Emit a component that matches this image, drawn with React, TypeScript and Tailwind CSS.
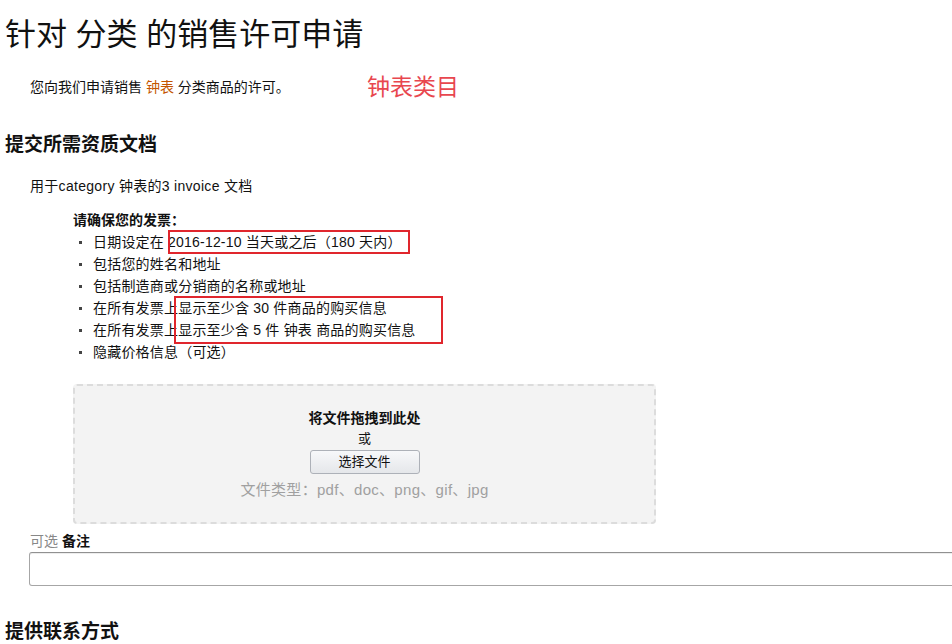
const items = [
  "日期设定在 2016-12-10 当天或之后（180 天内）",
  "包括您的姓名和地址",
  "包括制造商或分销商的名称或地址",
  "在所有发票上显示至少含 30 件商品的购买信息",
  "在所有发票上显示至少含 5 件 钟表 商品的购买信息",
  "隐藏价格信息（可选）",
];

const App = () => {
  return (
    <div
      className="w-[952px] h-[644px] overflow-hidden bg-white text-[#111]"
      style={{ fontFamily: '"Liberation Sans", "Noto Sans CJK SC", sans-serif' }}
    >
      <h1 className="pt-[16px] pl-[5px] text-[31px] leading-[38px] font-normal">针对 分类 的销售许可申请</h1>

      <div className="mt-[18px] h-[30px] pl-[30px] flex items-center">
        <span className="w-[337px] text-[14px] leading-[20px]">
          您向我们申请销售 <span className="text-[#c45500]">钟表</span> 分类商品的许可。
        </span>
        <span className="text-[23px] leading-[30px] text-[#e8474f]">钟表类目</span>
      </div>

      <h2 className="mt-[31px] pl-[5px] text-[19px] leading-[24px] font-bold">提交所需资质文档</h2>

      <p className="mt-[19px] pl-[30px] text-[14px] leading-[20px] tracking-[0.3px]">用于category 钟表的3 invoice 文档</p>

      <div className="relative mt-[14px] pl-[73px]">
        <p className="text-[14px] leading-[20px] font-bold">请确保您的发票：</p>
        <ul className="mt-[1px] ml-[6px]">
          {items.map((t) => (
            <li key={t} className="flex items-center text-[14px] leading-[22px] tracking-[0.2px]">
              <span className="w-[3px] h-[3px] bg-[#444] mr-[11px]" />
              {t}
            </li>
          ))}
        </ul>
        {/* annotation boxes */}
        <div className="absolute left-[168px] top-[20px] w-[242px] h-[24px] border-2 border-[#e0262d]" />
        <div className="absolute left-[174px] top-[86px] w-[269px] h-[48px] border-2 border-[#e0262d]" />
      </div>

      <div className="mt-[21px] ml-[73px] w-[583px] h-[140px] rounded-[4px] border-2 border-dashed border-[#dcdcdc] bg-[#f3f3f3] flex flex-col items-center pt-[22px]">
        <div className="text-[14px] leading-[20px] font-bold">将文件拖拽到此处</div>
        <div className="mt-[1px] text-[13px] leading-[20px]">或</div>
        <button className="mt-[1px] w-[110px] h-[24px] rounded-[3px] border border-[#adb1b8] bg-gradient-to-b from-[#f7f8fa] to-[#e5e7ea] text-[13px] leading-[20px] text-[#111]">
          选择文件
        </button>
        <div className="mt-[6px] text-[15px] leading-[20px] tracking-[0.3px] text-[#a0a0a0]">文件类型：pdf、doc、png、gif、jpg</div>
      </div>

      <div className="mt-[7px] pl-[30px] text-[14px] leading-[20px]">
        <span className="text-[#888]">可选</span> <span className="font-bold">备注</span>
      </div>
      <div className="mt-[1px] ml-[29px] mr-[-20px] h-[34px] rounded-[3px] border border-[#a6a6a6] border-t-[#919191] bg-white shadow-[inset_0_1px_0_rgba(0,0,0,0.07)]" />

      <h2 className="mt-[34px] pl-[5px] text-[19px] leading-[24px] font-bold">提供联系方式</h2>
    </div>
  );
};

export default App;
